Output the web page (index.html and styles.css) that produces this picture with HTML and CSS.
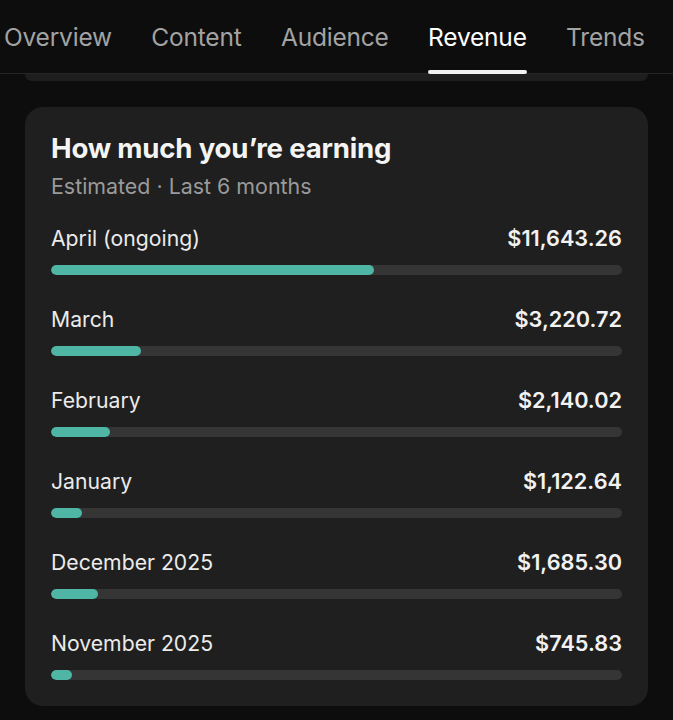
FILE: index.html
```html
<!DOCTYPE html>
<html lang="en">
<head>
    <meta charset="UTF-8">
    <title>Revenue</title>
    <link rel="stylesheet" href="styles.css">
</head>
<body>
<div class="tabs">
    <a href="javascript:;" class="tab">Overview</a>
    <a href="javascript:;" class="tab">Content</a>
    <a href="javascript:;" class="tab">Audience</a>
    <a href="javascript:;" class="tab active">Revenue</a>
    <a href="javascript:;" class="tab">Trends</a>
</div>
<div class="prev_card"></div>
<div class="card">
    <h2 class="title">How much you’re earning</h2>
    <p class="sub">Estimated · Last 6 months</p>
    <div class="row">
        <div class="row_top"><span>April (ongoing)</span><b>$11,643.26</b></div>
        <div class="track"><div class="fill" style="width:56.6%"></div></div>
    </div>
    <div class="row">
        <div class="row_top"><span>March</span><b>$3,220.72</b></div>
        <div class="track"><div class="fill" style="width:15.7%"></div></div>
    </div>
    <div class="row">
        <div class="row_top"><span>February</span><b>$2,140.02</b></div>
        <div class="track"><div class="fill" style="width:10.4%"></div></div>
    </div>
    <div class="row">
        <div class="row_top"><span>January</span><b>$1,122.64</b></div>
        <div class="track"><div class="fill" style="width:5.5%"></div></div>
    </div>
    <div class="row">
        <div class="row_top"><span>December 2025</span><b>$1,685.30</b></div>
        <div class="track"><div class="fill" style="width:8.2%"></div></div>
    </div>
    <div class="row">
        <div class="row_top"><span>November 2025</span><b>$745.83</b></div>
        <div class="track"><div class="fill" style="width:3.7%"></div></div>
    </div>
</div>
</body>
</html>
```

FILE: styles.css
```css
*{
    margin:0;
    padding:0;
    text-decoration:none;
    box-sizing:border-box;
}
body{
    background:#0d0d0d;
    font-family:Inter, "Noto Sans", sans-serif;
    color:#ececec;
    width:673px;
    height:720px;
    overflow:hidden;
}
.tabs{
    height:74px;
    display:flex;
    gap:39.4px;
    padding-left:4px;
    padding-top:2px;
    border-bottom:1px solid #262626;
    white-space:nowrap;
}
.tab{
    position:relative;
    font-size:24.5px;
    line-height:71px;
    color:#a3a3a3;
    letter-spacing:-0.2px;
}
.tab.active{
    color:#fff;
}
.tab.active:after{
    content:'';
    position:absolute;
    left:0;
    right:0;
    bottom:-1px;
    height:4px;
    border-radius:2px;
    background:#f2f2f2;
}
.prev_card{
    height:7px;
    margin:0 25px;
    background:#1e1e1e;
    border-radius:0 0 14px 14px;
}
.card{
    margin:26px 25px 0;
    background:#1f1f1f;
    border-radius:18px;
    padding:23px 26px 26px;
}
.title{
    font-size:27.6px;
    font-weight:700;
    line-height:36px;
    color:#f4f4f4;
    letter-spacing:-0.2px;
}
.sub{
    font-size:21.4px;
    line-height:30px;
    color:#9a9a9a;
    margin-top:5px;
}
.row{
    margin-top:23px;
}
.row + .row{
    margin-top:30px;
}
.row_top{
    display:flex;
    justify-content:space-between;
    font-size:21.2px;
    line-height:28px;
    color:#ebebeb;
}
.row_top b{
    font-size:21.7px;
    font-weight:600;
    color:#f2f2f2;
}
.track{
    margin-top:13px;
    height:10px;
    border-radius:5px;
    background:#353535;
    overflow:hidden;
}
.fill{
    height:100%;
    border-radius:5px;
    background:#4fb5a5;
}
```
